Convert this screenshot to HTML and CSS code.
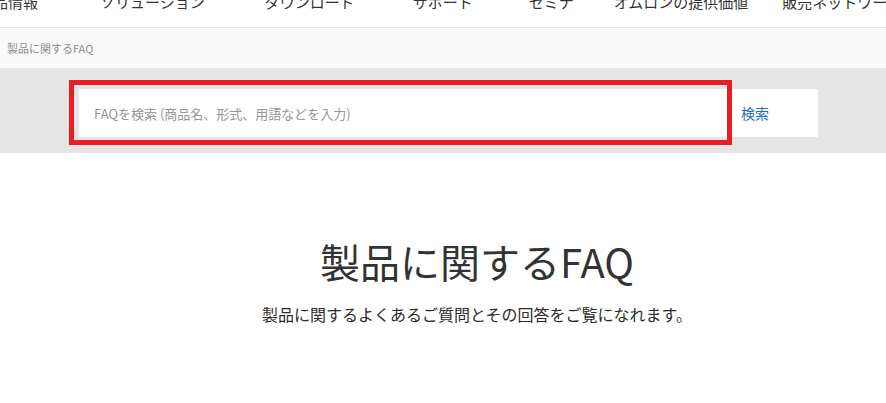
FILE: index.html
```html
<!DOCTYPE html>
<html lang="ja">
<head>
<meta charset="utf-8">
<title>製品に関するFAQ</title>
<link rel="stylesheet" href="styles.css">
</head>
<body>
<header class="gnav">
  <ul class="gnav-list">
    <li class="gnav-item gnav-first">製品情報</li>
    <li class="gnav-item gnav-solution">ソリューション</li>
    <li class="gnav-item">ダウンロード</li>
    <li class="gnav-item gnav-support">サポート</li>
    <li class="gnav-item gnav-seminar">セミナ</li>
    <li class="gnav-item gnav-value">オムロンの提供価値</li>
    <li class="gnav-item">販売ネットワーク</li>
  </ul>
</header>
<div class="breadcrumb">製品に関するFAQ</div>
<section class="search">
  <form class="search-form">
    <div class="search-input">FAQを検索 (商品名、形式、用語などを入力)</div>
    <div class="search-btn">検索</div>
  </form>
  <div class="highlight"></div>
</section>
<main class="hero">
  <h1 class="hero-title">製品に関するFAQ</h1>
  <p class="hero-lead">製品に関するよくあるご質問とその回答をご覧になれます。</p>
</main>
</body>
</html>
```
FILE: styles.css
```css
* { box-sizing: border-box; }
html, body {
  margin: 0;
  padding: 0;
  background: #fff;
  font-family: "Noto Sans CJK JP", "Noto Sans", sans-serif;
  color: #333;
  overflow: hidden;
}
.gnav {
  height: 28px;
  border-bottom: 1px solid #e3e3e3;
  overflow: hidden;
}
.gnav-list {
  list-style: none;
  margin: -6px 0 0 0;
  padding: 0;
  display: flex;
  white-space: nowrap;
  font-size: 15px;
  line-height: 15px;
}
.gnav-item { margin-right: 58px; }
.gnav-first { margin-left: -22px; margin-right: 62px; }
.gnav-solution { margin-right: 60px; }
.gnav-support { margin-right: 56px; }
.gnav-seminar { margin-right: 40px; }
.gnav-value { margin-right: 34px; }
.breadcrumb {
  height: 40px;
  background: #f9f9f9;
  display: flex;
  align-items: center;
  padding-left: 7px;
  font-size: 11px;
  color: #8c8c8c;
}
.search {
  position: relative;
  background: #e5e5e5;
  padding: 21px 0 16px 79px;
}
.search-form {
  display: flex;
  height: 48px;
}
.search-input {
  width: 650px;
  background: #fff;
  display: flex;
  align-items: center;
  padding-left: 15px;
  font-size: 13px;
  color: #959595;
}
.search-btn {
  width: 89px;
  background: #fff;
  display: flex;
  align-items: center;
  padding-left: 12px;
  font-size: 14px;
  color: #1a6fc2;
}
.highlight {
  position: absolute;
  left: 69px;
  top: 12px;
  width: 663px;
  height: 65px;
  border: 5px solid #ed1c24;
}
.hero {
  text-align: center;
  padding-left: 68px;
}
.hero-title {
  margin: 0;
  padding-top: 80px;
  font-size: 40px;
  font-weight: 400;
  line-height: 56px;
  color: #333;
}
.hero-lead {
  margin: 13px 0 0;
  font-size: 16px;
  line-height: 24px;
  color: #2b2b2b;
}
```
